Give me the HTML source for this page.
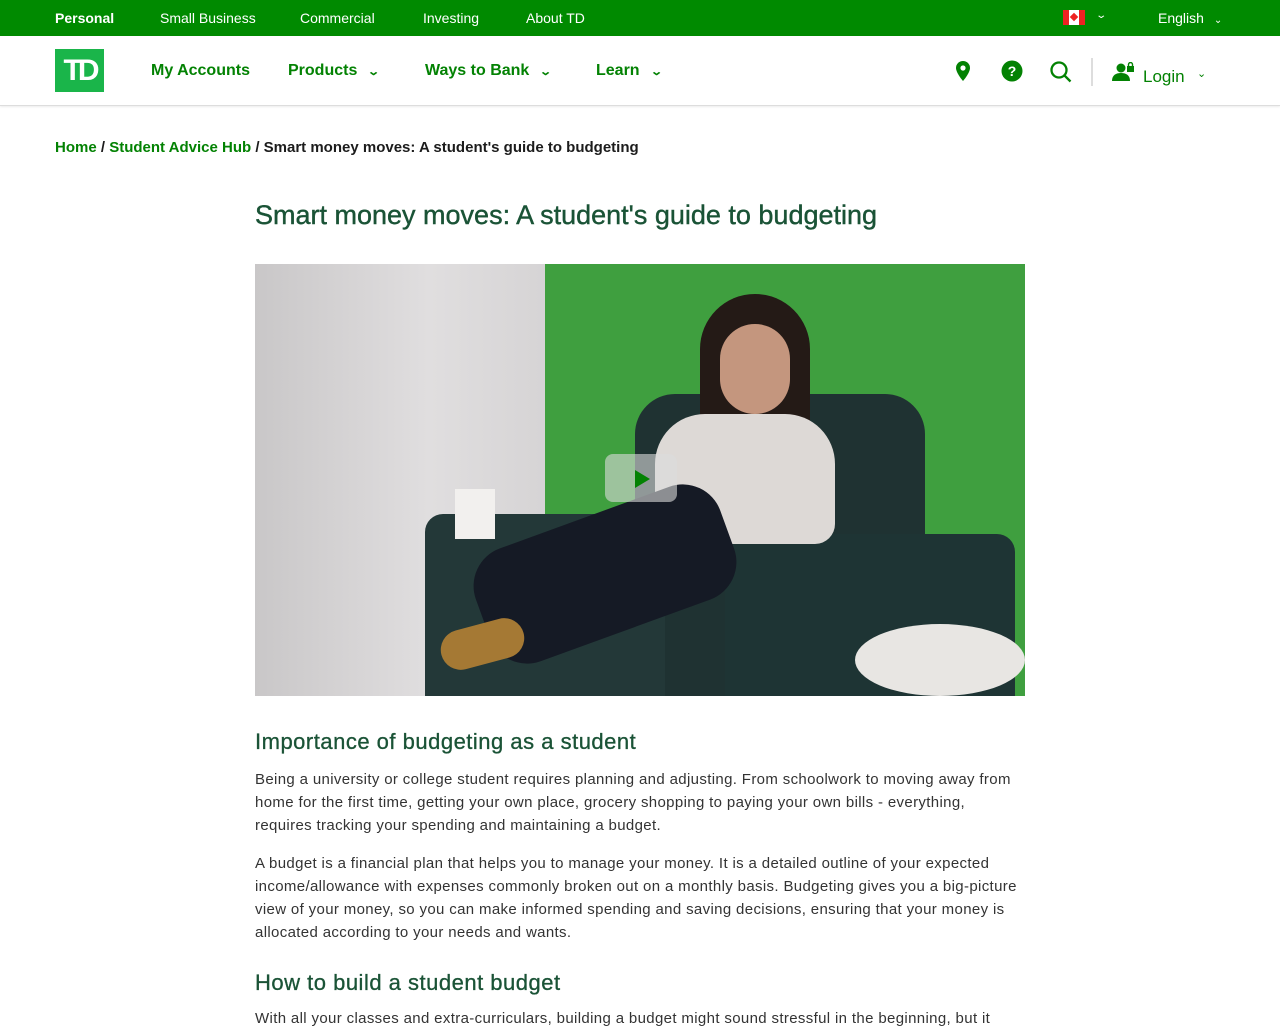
<!DOCTYPE html>
<html><head><meta charset="utf-8"><style>
*{margin:0;padding:0;box-sizing:border-box}
body{width:1280px;height:1024px;overflow:hidden;background:#fff;font-family:"Liberation Sans",sans-serif;color:#1c1c1c}
.top{height:36px;background:#008a00;color:#fff;font-size:14px;position:relative}
.top span{position:absolute;top:10px}
.nav{height:70px;border-bottom:1px solid #ddd;position:relative;box-shadow:0 1px 2px rgba(0,0,0,.08)}
.nav .l{position:absolute;top:26px;color:#038203;font-size:16px;font-weight:bold}
.chev{font-size:11px;margin-left:12px;display:inline-block;transform:scaleX(1.4)}
.logo{position:absolute;left:55px;top:49px;width:49px;height:43px;background:#1ab54a;color:#fff;font-weight:bold;font-size:30px;letter-spacing:-4px;text-align:center;line-height:43px}
.crumb{position:absolute;left:55px;top:139px;font-size:15px;font-weight:bold}
.crumb a{color:#038203;text-decoration:none}
h1{position:absolute;left:255px;top:200px;font-size:27px;color:#1a5336;font-weight:normal;letter-spacing:0;-webkit-text-stroke:.4px #1a5336}
.img{position:absolute;left:255px;top:264px;width:770px;height:432px;overflow:hidden;background:#3f9f3f}
h2{font-size:22px;color:#1a5336;font-weight:normal;position:absolute;left:255px;letter-spacing:.5px;-webkit-text-stroke:.3px #1a5336}
p{position:absolute;left:255px;width:768px;font-size:15px;line-height:23px;color:#333;letter-spacing:.35px}
</style></head><body>
<div class="top">
<span style="left:55px;font-weight:bold">Personal</span>
<span style="left:160px">Small Business</span>
<span style="left:300px">Commercial</span>
<span style="left:423px">Investing</span>
<span style="left:526px">About TD</span>
<span style="left:1063px;top:10px;width:22px;height:15px;background:linear-gradient(90deg,#e22 0 27%,#fff 27% 73%,#e22 73%)"><i style="position:absolute;left:8px;top:4px;width:6px;height:6px;background:#e22;transform:rotate(45deg)"></i></span>
<span style="left:1097px;font-size:10px;transform:scaleX(1.4)">&#8964;</span>
<span style="left:1158px">English <span style="position:static;font-size:10px;margin-left:6px">&#8964;</span></span>
</div>
<div class="nav">
<span class="l" style="left:151px">My Accounts</span>
<span class="l" style="left:288px">Products<span class="chev">&#8964;</span></span>
<span class="l" style="left:425px">Ways to Bank<span class="chev">&#8964;</span></span>
<span class="l" style="left:596px">Learn<span class="chev">&#8964;</span></span>
<svg style="position:absolute;left:953px;top:24px" width="20" height="24" viewBox="0 0 20 24"><path d="M10 1a7 7 0 0 0-7 7c0 5 7 13 7 13s7-8 7-13a7 7 0 0 0-7-7z" fill="#038203"/><circle cx="10" cy="8" r="2.6" fill="#fff"/></svg>
<svg style="position:absolute;left:1001px;top:24px" width="22" height="22"><circle cx="11" cy="11" r="10.5" fill="#038203"/><text x="11" y="16" font-size="14" font-weight="bold" fill="#fff" text-anchor="middle" font-family="Liberation Sans">?</text></svg>
<svg style="position:absolute;left:1049px;top:24px" width="24" height="24"><circle cx="10" cy="10" r="7.5" fill="none" stroke="#038203" stroke-width="2.3"/><path d="M15.5 15.5l6 6" stroke="#038203" stroke-width="2.3"/></svg>
<div style="position:absolute;left:1091px;top:22px;width:2px;height:28px;background:#ddd"></div>
<svg style="position:absolute;left:1112px;top:26px" width="24" height="20"><circle cx="9" cy="6" r="4.5" fill="#038203"/><path d="M0 19c0-6 4-8 9-8s9 2 9 8z" fill="#038203"/><rect x="15" y="4" width="7" height="6" fill="#038203"/><path d="M16.5 4V2.5a2 2 0 0 1 4 0V4" stroke="#038203" fill="none" stroke-width="1.4"/></svg>
<span style="position:absolute;left:1143px;top:31px;color:#038203;font-size:17px">Login</span>
<span style="position:absolute;left:1197px;top:31px;color:#038203;font-size:11px">&#8964;</span>
</div>
<div class="logo">TD</div>
<div class="crumb"><a>Home</a> / <a>Student Advice Hub</a> / Smart money moves: A student's guide to budgeting</div>
<h1>Smart money moves: A student's guide to budgeting</h1>
<div class="img">
<div style="position:absolute;left:0;top:0;width:290px;height:432px;background:linear-gradient(90deg,#c9c7c8,#e0dedf 60%,#d6d4d5)"></div>
<div style="position:absolute;left:380px;top:130px;width:290px;height:302px;background:#1f3232;border-radius:40px 40px 0 0"></div>
<div style="position:absolute;left:170px;top:250px;width:240px;height:182px;background:#233838;border-radius:18px 18px 0 0"></div>
<div style="position:absolute;left:470px;top:270px;width:290px;height:162px;background:#1e3434;border-radius:18px 18px 0 0"></div>
<div style="position:absolute;left:445px;top:30px;width:110px;height:150px;background:#241a16;border-radius:55px 55px 20px 20px"></div>
<div style="position:absolute;left:465px;top:60px;width:70px;height:90px;background:#c4967e;border-radius:35px"></div>
<div style="position:absolute;left:400px;top:150px;width:180px;height:130px;background:#ddd9d6;border-radius:50px 50px 20px 20px"></div>
<div style="position:absolute;left:220px;top:250px;width:260px;height:120px;background:#151a25;border-radius:40px;transform:rotate(-20deg)"></div>
<div style="position:absolute;left:185px;top:360px;width:85px;height:40px;background:#a57934;border-radius:20px;transform:rotate(-15deg)"></div>
<div style="position:absolute;left:200px;top:225px;width:40px;height:50px;background:#f2f0ee"></div>
<div style="position:absolute;left:600px;top:360px;width:170px;height:72px;background:#e8e6e3;border-radius:50%"></div>
<div style="position:absolute;left:350px;top:190px;width:72px;height:48px;background:rgba(220,220,220,.6);border-radius:8px"></div>
<svg style="position:absolute;left:378px;top:205px" width="18" height="20"><path d="M2 1l15 9-15 9z" fill="#038203"/></svg>
</div>
<h2 style="top:729px">Importance of budgeting as a student</h2>
<p style="top:768px">Being a university or college student requires planning and adjusting. From schoolwork to moving away from home for the first time, getting your own place, grocery shopping to paying your own bills - everything, requires tracking your spending and maintaining a budget.</p>
<p style="top:852px">A budget is a financial plan that helps you to manage your money. It is a detailed outline of your expected income/allowance with expenses commonly broken out on a monthly basis. Budgeting gives you a big-picture view of your money, so you can make informed spending and saving decisions, ensuring that your money is allocated according to your needs and wants.</p>
<h2 style="top:970px">How to build a student budget</h2>
<p style="top:1007px">With all your classes and extra-curriculars, building a budget might sound stressful in the beginning, but it</p>
</body></html>
